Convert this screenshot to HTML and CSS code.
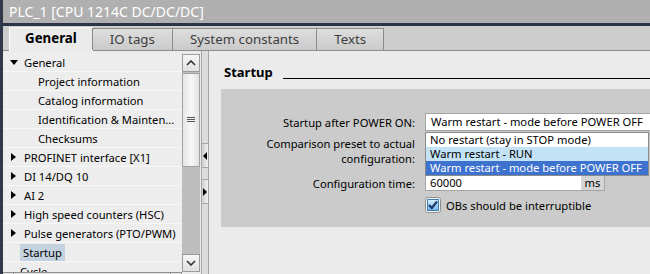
FILE: index.html
```html
<!DOCTYPE html>
<html lang="en">
<head>
    <meta charset="UTF-8">
    <title>PLC_1 Properties</title>
    <link rel="stylesheet" href="styles.css">
</head>
<body>
    <div class="window">
        <div class="title">PLC_1 [CPU 1214C DC/DC/DC]</div>
        <div class="tabs">
            <div class="tab active">General</div>
            <div class="tab">IO tags</div>
            <div class="tab">System constants</div>
            <div class="tab">Texts</div>
        </div>
        <div class="main">
            <div class="nav">
                <div class="tree">
                    <ul class="tree-list">
                        <li class="row"><span class="arrow down"></span>General</li>
                        <li class="row child">Project information</li>
                        <li class="row child">Catalog information</li>
                        <li class="row child">Identification &amp; Mainten...</li>
                        <li class="row child">Checksums</li>
                        <li class="row"><span class="arrow"></span>PROFINET interface [X1]</li>
                        <li class="row"><span class="arrow"></span>DI 14/DQ 10</li>
                        <li class="row"><span class="arrow"></span>AI 2</li>
                        <li class="row"><span class="arrow"></span>High speed counters (HSC)</li>
                        <li class="row"><span class="arrow"></span>Pulse generators (PTO/PWM)</li>
                        <li class="row leaf"><span class="selected">Startup</span></li>
                        <li class="row leaf">Cycle</li>
                    </ul>
                    <div class="hscroll">
                        <div class="hbtn"></div>
                        <div class="htrack"></div>
                        <div class="hbtn"></div>
                    </div>
                </div>
                <div class="vscroll">
                    <div class="sbtn">
                        <svg width="10" height="6" viewBox="0 0 10 6"><polyline points="1,5 5,1 9,5" fill="none" stroke="#333" stroke-width="1.6"/></svg>
                    </div>
                    <div class="thumb">
                        <svg width="8" height="6" viewBox="0 0 8 6"><path d="M0 0.5h8M0 2.5h8M0 4.5h8" stroke="#555" stroke-width="1"/></svg>
                    </div>
                    <div class="track"></div>
                    <div class="sbtn">
                        <svg width="10" height="6" viewBox="0 0 10 6"><polyline points="1,1 5,5 9,1" fill="none" stroke="#333" stroke-width="1.6"/></svg>
                    </div>
                </div>
            </div>
            <div class="splitter">
                <div class="split-btn"><span class="tri left"></span></div>
                <div class="split-btn"><span class="tri right"></span></div>
            </div>
            <div class="props">
                <div class="section-head">
                    <span class="section-title">Startup</span>
                    <span class="section-rule"></span>
                </div>
                <div class="section-box">
                    <div class="field-row first">
                        <label class="field-label">Startup after POWER ON:</label>
                        <div class="select">Warm restart - mode before POWER OFF</div>
                    </div>
                    <div class="field-row compare">
                        <label class="field-label">Comparison preset to actual<br>configuration:</label>
                    </div>
                    <div class="field-row time">
                        <label class="field-label">Configuration time:</label>
                        <div class="input">
                            <span class="input-value">60000</span>
                            <span class="unit">ms</span>
                        </div>
                    </div>
                    <div class="field-row check">
                        <span class="field-label"></span>
                        <svg class="checkbox" width="16" height="16" viewBox="0 0 16 16">
                            <defs>
                                <linearGradient id="cbfill" x1="0" y1="0" x2="0" y2="1">
                                    <stop offset="0" stop-color="#d9eefc"/>
                                    <stop offset="1" stop-color="#6fb3e8"/>
                                </linearGradient>
                            </defs>
                            <rect x="0.5" y="0.5" width="15" height="15" rx="2" fill="#f4f4f4" stroke="#8e8f8f"/>
                            <rect x="2.5" y="2.5" width="11" height="11" fill="url(#cbfill)" stroke="#3c7fb1"/>
                            <path d="M4 8 L6.8 11 L12 4.5" fill="none" stroke="#1f3a6e" stroke-width="2.2"/>
                        </svg>
                        <span class="check-label">OBs should be interruptible</span>
                    </div>
                    <ul class="dropdown">
                        <li class="option">No restart (stay in STOP mode)</li>
                        <li class="option hover">Warm restart - RUN</li>
                        <li class="option current">Warm restart - mode before POWER OFF</li>
                    </ul>
                </div>
            </div>
        </div>
    </div>
</body>
</html>
```
FILE: styles.css
```css
body {
    margin: 0;
    width: 650px;
    height: 274px;
    overflow: hidden;
    font-family: 'Noto Sans', 'Open Sans', sans-serif;
    font-size: 11.2px;
    color: #000;
    background-color: #ebebeb;
}

.window {
    height: 274px;
    display: flex;
    flex-direction: column;
    border-left: 3px solid #2f3949;
}

.title {
    height: 23px;
    line-height: 23px;
    padding-left: 6px;
    font-size: 14px;
    color: #fff;
    background-color: #b0b0b0;
    border-bottom: 3px solid #2c3546;
    flex-shrink: 0;
}

/* tab strip */
.tabs {
    height: 24px;
    display: flex;
    align-items: flex-end;
    padding-left: 6px;
    background-color: #cdcdcd;
    border-bottom: 1px solid #8d8d8d;
    flex-shrink: 0;
}

.tab {
    height: 21px;
    line-height: 21px;
    padding: 0 17px;
    font-size: 13.3px;
    color: #3d3d3d;
    background: linear-gradient(#dedede, #cacaca);
    border: 1px solid #8a8a8a;
    border-bottom: none;
    margin-right: -1px;
}

.tab.active {
    height: 23px;
    margin-bottom: -1px;
    padding: 0 15px;
    font-weight: bold;
    color: #000;
    background: #ebebeb;
    border-color: #f6f6f6;
    border-left-color: #ffffff;
}

.main {
    flex: 1;
    display: flex;
    min-height: 0;
}

/* left navigation tree */
.nav {
    width: 197px;
    display: flex;
    padding-top: 2px;
    flex-shrink: 0;
}

.tree {
    width: 179px;
    display: flex;
    flex-direction: column;
}

.tree-list {
    list-style: none;
    margin: 0;
    padding: 0;
    height: 219px;
    overflow: hidden;
    flex-shrink: 0;
    background-color: #ededed;
}

.row {
    height: 19px;
    box-sizing: border-box;
    display: flex;
    align-items: center;
    padding-left: 7px;
    border-bottom: 1px solid #f7f7f7;
    white-space: nowrap;
}

.row.child {
    padding-left: 35px;
}

.row.leaf {
    padding-left: 17px;
}

.arrow {
    width: 0;
    height: 0;
    margin: 0 8px 0 1px;
    border-left: 5px solid #000;
    border-top: 4px solid transparent;
    border-bottom: 4px solid transparent;
}

.arrow.down {
    margin: 0 6px 0 0;
    border-top: 5px solid #000;
    border-left: 4px solid transparent;
    border-right: 4px solid transparent;
    border-bottom: none;
}

.selected {
    padding: 1px 3px;
    background-color: #c4d1de;
}

.hscroll {
    height: 17px;
    display: flex;
    border-top: 1px solid #8f8f8f;
    background-color: #e3e3e3;
}

.hbtn {
    width: 10px;
    border-right: 1px solid #8f8f8f;
}

.htrack {
    flex: 1;
    border-right: 1px solid #8f8f8f;
}

.vscroll {
    width: 18px;
    height: 218px;
    margin-top: 1px;
    display: flex;
    flex-direction: column;
    background-color: #bdbdbd;
}

.sbtn {
    height: 16px;
    display: flex;
    align-items: center;
    justify-content: center;
    background: linear-gradient(#f5f5f5, #e1e1e1);
    border: 1px solid #9c9c9c;
}

.thumb {
    height: 92px;
    margin-top: 1px;
    display: flex;
    align-items: center;
    justify-content: center;
    background: linear-gradient(90deg, #e6e6e6, #f7f7f7 50%, #e2e2e2);
    border: 1px solid #a2a2a2;
}

.track {
    flex: 1;
}

/* splitter between tree and properties */
.splitter {
    width: 6px;
    margin-left: 1px;
    display: flex;
    flex-direction: column;
    align-items: center;
    padding-top: 92px;
    gap: 11px;
    background-color: #dcdcdc;
    border-left: 1px solid #a6a6a6;
    border-right: 1px solid #a6a6a6;
}

.split-btn {
    width: 6px;
    height: 23px;
    display: flex;
    align-items: center;
    justify-content: center;
    background: linear-gradient(90deg, #cfcfcf, #f0f0f0);
    border-top: 1px solid #a6a6a6;
    border-bottom: 1px solid #a6a6a6;
}

.tri {
    width: 0;
    height: 0;
    border-top: 4px solid transparent;
    border-bottom: 4px solid transparent;
}

.tri.left {
    border-right: 4px solid #000;
}

.tri.right {
    border-left: 4px solid #000;
}

/* properties area */
.props {
    flex: 1;
    padding-left: 12px;
    min-width: 0;
}

.section-head {
    height: 16px;
    margin-top: 13px;
    display: flex;
    align-items: center;
    padding-left: 3px;
}

.section-title {
    font-size: 13px;
    font-weight: bold;
    margin-right: 10px;
}

.section-rule {
    flex: 1;
    height: 1px;
    align-self: flex-end;
    margin-bottom: 1px;
    background-color: #000;
}

.section-box {
    position: relative;
    height: 114px;
    margin-top: 9px;
    padding-top: 24px;
    background-color: #cbcbcb;
}

.field-row {
    display: flex;
    align-items: center;
    white-space: nowrap;
}

.field-label {
    width: 194px;
    margin-right: 10px;
    text-align: right;
    flex-shrink: 0;
}

.select {
    flex: 1;
    height: 16px;
    line-height: 16px;
    padding-left: 5px;
    background-color: #fff;
    border: 1px solid #a5a5a5;
    border-right: none;
    overflow: hidden;
}

.compare {
    margin-top: 5px;
    line-height: 15px;
}

.time {
    margin-top: 9px;
}

.input {
    width: 178px;
    height: 14px;
    display: flex;
    background-color: #fff;
    border: 1px solid #a5a5a5;
    line-height: 14px;
}

.input-value {
    flex: 1;
    padding-left: 4px;
}

.unit {
    width: 23px;
    text-align: center;
    background-color: #d5d5d5;
}

.check {
    margin-top: 6px;
}

.checkbox {
    flex-shrink: 0;
}

.check-label {
    margin-left: 5px;
}

.dropdown {
    position: absolute;
    top: 43px;
    left: 204px;
    width: 222px;
    margin: 0;
    padding: 0;
    list-style: none;
    background-color: #fff;
    border: 1px solid #8a8a8a;
}

.option {
    height: 14px;
    line-height: 14px;
    padding-left: 4px;
    white-space: nowrap;
}

.option.hover {
    background-color: #c3e2f6;
}

.option.current {
    color: #fff;
    background-color: #3d72cf;
}
```
